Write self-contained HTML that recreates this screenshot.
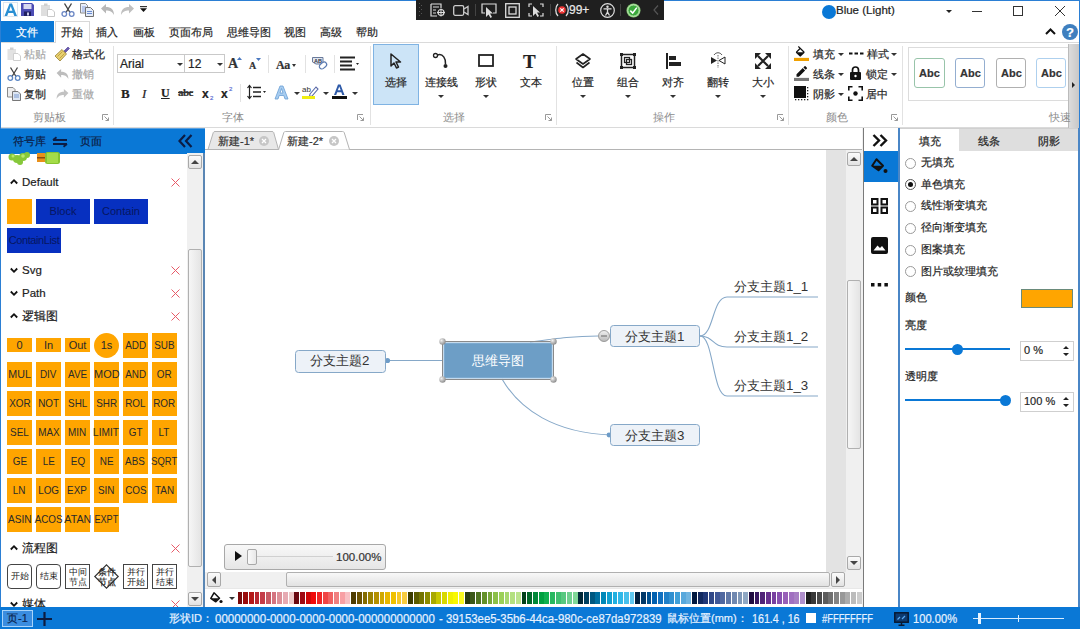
<!DOCTYPE html>
<html><head><meta charset="utf-8">
<style>
*{box-sizing:border-box;margin:0;padding:0}
body{width:1080px;height:629px;position:relative;overflow:hidden;background:#fff;font-family:"Liberation Sans",sans-serif;font-size:12px;color:#262626}
.a{position:absolute}
.t{position:absolute;white-space:nowrap;line-height:1;font-size:11px;-webkit-text-stroke-width:0.2px}
svg{position:absolute;overflow:visible}
.sep{position:absolute;width:1px;background:#e2e2e2}
.gl{position:absolute;color:#8c8c8c;font-size:11px;line-height:1;white-space:nowrap}
.dd{position:absolute;width:0;height:0;border-left:3px solid transparent;border-right:3px solid transparent;border-top:3px solid #333}
.x{position:absolute;color:#e04040;font-size:14px;line-height:1}
.cell{position:absolute;width:25px;height:25px;background:#ffa500;color:#2a2a2a;font-size:11px;line-height:25px;white-space:nowrap;display:flex;justify-content:center}
.sw{position:absolute;top:592px;width:5px;height:12px}
.fc{position:absolute;top:564px;width:25px;height:25px;border:1px solid #444;background:#fff;font-size:9px;line-height:10px;text-align:center;color:#222}
</style></head><body>
<!-- window border -->
<div class="a" style="left:0;top:0;width:1080px;height:1px;background:#2b7fd4"></div>
<div class="a" style="left:0;top:0;width:1px;height:629px;background:#2b7fd4"></div>
<div class="a" style="left:1079px;top:0;width:1px;height:629px;background:#2b7fd4"></div>
<!-- TITLE BAR -->
<svg style="left:3px;top:2px" width="16" height="15" viewBox="0 0 16 15"><rect x="0.5" y="0.5" width="14" height="14" fill="none" stroke="#dde6f0"/><path d="M1.5 14 L6.5 1.5 L9 1.5 L14 14 L11.3 14 L10.2 11 L5.3 11 L4.2 14 Z M6.1 8.7 L9.4 8.7 L7.75 4.2 Z" fill="#2a8fd3"/></svg>
<svg style="left:21px;top:3px" width="13" height="13" viewBox="0 0 13 13"><path d="M0 0H11L13 2V13H0Z" fill="#4c4cb4"/><rect x="2.5" y="1" width="8" height="5" fill="#d8d8f0"/><rect x="3" y="8.5" width="7" height="4.5" fill="#1e1e60"/><rect x="6" y="9.5" width="2" height="3" fill="#c8c8e8"/></svg>
<svg style="left:41px;top:3px" width="14" height="14" viewBox="0 0 14 14"><rect x="0" y="2" width="9" height="11" fill="#dedede"/><rect x="3" y="0.5" width="3.5" height="2.5" fill="#cfcfcf"/><path d="M6.5 6.5H11L13.5 9V13.5H6.5Z" fill="#fff" stroke="#c8c8c8"/></svg>
<svg style="left:61px;top:3px" width="14" height="14" viewBox="0 0 14 14"><path d="M3.5 0.5 L9 9.5 M10.5 0.5 L5 9.5" stroke="#444" stroke-width="1.4" fill="none"/><circle cx="3.3" cy="11" r="2.3" fill="none" stroke="#6a86c4" stroke-width="1.3"/><circle cx="10.7" cy="11" r="2.3" fill="none" stroke="#6a86c4" stroke-width="1.3"/></svg>
<svg style="left:80px;top:3px" width="14" height="14" viewBox="0 0 14 14"><path d="M0.5 0.5H5.5L7.5 2.5V10H0.5Z" fill="#e8eefa" stroke="#8a8a8a"/><path d="M2 4H6M2 6H6M2 8H5" stroke="#8aa4e0"/><path d="M5.5 4.5H10.5L13.5 7.5V13.5H5.5Z" fill="#e4ecf8" stroke="#707070"/><path d="M7 8.5H12M7 10.5H12" stroke="#6a8ad0"/></svg>
<svg style="left:101px;top:4px" width="13" height="11" viewBox="0 0 13 11"><path d="M0 4.5 L5 0 V3 C10 3 13 5.5 13 11 C11 7.5 9 6.5 5 6.5 V9.5 Z" fill="#b8b8b8"/></svg>
<svg style="left:121px;top:4px" width="13" height="11" viewBox="0 0 13 11"><path d="M13 4.5 L8 0 V3 C3 3 0 5.5 0 11 C2 7.5 4 6.5 8 6.5 V9.5 Z" fill="#c0c0c0"/></svg>
<svg style="left:140px;top:6px" width="7" height="6" viewBox="0 0 7 6"><path d="M0 0.6H7" stroke="#333" stroke-width="1.2"/><path d="M0 2.3H7L3.5 6Z" fill="#111"/></svg>

<div class="a" style="left:416px;top:0;width:248px;height:20px;background:#1f1f1f"></div>
<svg style="left:419px;top:3px" width="4" height="14"><g fill="#555"><rect x="0" y="0" width="1" height="1"/><rect x="2" y="2" width="1" height="1"/><rect x="0" y="4" width="1" height="1"/><rect x="2" y="6" width="1" height="1"/><rect x="0" y="8" width="1" height="1"/><rect x="2" y="10" width="1" height="1"/><rect x="0" y="12" width="1" height="1"/></g></svg>
<svg style="left:430px;top:3px" width="16" height="14" viewBox="0 0 16 14"><path d="M1 1H11V5M1 1V13H7M3 4H9M3 7H6M3 10H6" stroke="#ddd" fill="none" stroke-width="1.2"/><circle cx="11" cy="9.5" r="3" fill="none" stroke="#ddd" stroke-width="1.2"/><path d="M11 5.5V13.5M7 9.5H15" stroke="#ddd"/></svg>
<svg style="left:453px;top:5px" width="16" height="11" viewBox="0 0 16 11"><rect x="0.7" y="0.7" width="10" height="9.6" rx="1.5" fill="none" stroke="#ccc" stroke-width="1.3"/><path d="M11 4 L15 1.5 V9.5 L11 7" fill="none" stroke="#ccc" stroke-width="1.3"/></svg>
<div class="a" style="left:475px;top:4px;width:1px;height:12px;background:#444"></div>
<svg style="left:481px;top:3px" width="16" height="15" viewBox="0 0 16 15"><path d="M4 10H1V1H15V10H12" fill="none" stroke="#ddd" stroke-width="1.2"/><path d="M5 4 L5 14 L7.5 11.5 L9.5 15 L11 14 L9 10.5 L12 10.5 Z" fill="#ddd"/></svg>
<svg style="left:505px;top:3px" width="15" height="15" viewBox="0 0 15 15"><rect x="0.7" y="0.7" width="13.6" height="13.6" fill="none" stroke="#ddd" stroke-width="1.3"/><rect x="4" y="4" width="7" height="7" fill="none" stroke="#ddd" stroke-width="1.3"/></svg>
<svg style="left:528px;top:3px" width="16" height="15" viewBox="0 0 16 15"><path d="M1 4V1H4M12 1H15V4M15 10V13H12M4 13H1V10" fill="none" stroke="#ddd" stroke-width="1.2"/><path d="M5 3 L5 13 L7.5 10.5 L9.5 14 L11 13 L9 9.5 L12 9.5 Z" fill="#ddd"/></svg>
<div class="a" style="left:550px;top:4px;width:1px;height:12px;background:#444"></div>
<svg style="left:555px;top:3px" width="14" height="14" viewBox="0 0 14 14"><path d="M3 1 C0 4 0 10 3 13 M11 1 C14 4 14 10 11 13" fill="none" stroke="#ddd" stroke-width="1.3"/><circle cx="7" cy="7" r="3.8" fill="#e33"/><path d="M5.3 5.3 L8.7 8.7 M8.7 5.3 L5.3 8.7" stroke="#fff" stroke-width="1.1"/></svg>
<div class="t" style="left:569px;top:4px;color:#e8e8e8;font-size:12px">99+</div>
<svg style="left:600px;top:3px" width="15" height="15" viewBox="0 0 15 15"><circle cx="7.5" cy="7.5" r="6.8" fill="none" stroke="#ddd" stroke-width="1.2"/><circle cx="7.5" cy="3.8" r="1.2" fill="#ddd"/><path d="M3.5 5.8H11.5M7.5 5.8V9M7.5 9L5.5 12.5M7.5 9L9.5 12.5" stroke="#ddd" stroke-width="1.3" fill="none"/></svg>
<div class="a" style="left:620px;top:4px;width:1px;height:12px;background:#444"></div>
<svg style="left:626px;top:3px" width="15" height="15" viewBox="0 0 15 15"><circle cx="7.5" cy="7.5" r="7" fill="#8ccf7a"/><circle cx="7.5" cy="7.5" r="5.6" fill="#3aa83a" stroke="#d8f0d0" stroke-width="0.8"/><path d="M4.3 7.6 L6.7 10 L10.8 4.6" stroke="#fff" stroke-width="1.5" fill="none"/></svg>
<svg style="left:653px;top:5px" width="6" height="10" viewBox="0 0 6 10"><path d="M5 0.5 L1 5 L5 9.5" stroke="#555" fill="none" stroke-width="1.2"/></svg>

<div class="a" style="left:822px;top:5px;width:14px;height:14px;border-radius:50%;background:#0a78d6"></div>
<div class="t" style="left:836px;top:5px;font-size:11.5px;color:#222">Blue (Light)</div>
<div class="dd" style="left:946px;top:10px;border-width:3px 3px 0 3px;border-top-color:#222"></div>
<div class="a" style="left:972px;top:11px;width:10px;height:1px;background:#333"></div>
<div class="a" style="left:1013px;top:6px;width:10px;height:10px;border:1px solid #333"></div>
<svg style="left:1055px;top:6px" width="10" height="10" viewBox="0 0 10 10"><path d="M0 0L10 10M10 0L0 10" stroke="#333" stroke-width="1"/></svg>
<svg style="left:1045px;top:28px" width="11" height="7" viewBox="0 0 11 7"><path d="M1 6 L5.5 1.5 L10 6" stroke="#111" stroke-width="2" fill="none"/></svg>
<div class="a" style="left:1062px;top:24px;width:16px;height:16px;border-radius:50%;background:#3f7fbf"></div>
<div class="t" style="left:1066px;top:26px;font-size:13px;font-weight:bold;color:#fff">?</div>
<!-- MENU BAR -->
<div class="a" style="left:1px;top:21px;width:53px;height:21px;background:#0a78d6"></div>
<div class="t" style="left:16px;top:27px;color:#fff">文件</div>
<div class="a" style="left:55px;top:21px;width:35px;height:22px;background:#fff;border:1px solid #d8d8d8;border-bottom:none;z-index:2"></div>
<div class="t" style="left:61px;top:27px;z-index:3">开始</div>
<div class="t" style="left:96px;top:27px">插入</div>
<div class="t" style="left:133px;top:27px">画板</div>
<div class="t" style="left:169px;top:27px">页面布局</div>
<div class="t" style="left:227px;top:27px">思维导图</div>
<div class="t" style="left:284px;top:27px">视图</div>
<div class="t" style="left:320px;top:27px">高级</div>
<div class="t" style="left:356px;top:27px">帮助</div>
<div class="a" style="left:1px;top:42px;width:1078px;height:1px;background:#dadada"></div>
<div class="a" style="left:1px;top:127px;width:1078px;height:1px;background:#dadada"></div>
<!-- RIBBON: clipboard -->
<svg style="left:7px;top:47px" width="14" height="14" viewBox="0 0 14 14"><rect x="0.5" y="2" width="8.5" height="11" fill="#e2e2e2"/><rect x="3" y="0.5" width="3.5" height="2.5" fill="#cfcfcf"/><path d="M6.5 6.5H11L13.5 9V13.5H6.5Z" fill="#fff" stroke="#cfcfcf"/></svg>
<div class="t" style="left:24px;top:49px;color:#a8a8a8">粘贴</div>
<svg style="left:54px;top:46px" width="16" height="15" viewBox="0 0 16 15"><path d="M9.5 5.5 L14 1 L15.5 2.5 L11 7" fill="#6a5ab0" stroke="#4a3a90" stroke-width="0.6"/><path d="M1 10 L8 3.5 L12.5 8 L6 15 Z" fill="#e8d070" stroke="#8a7020" stroke-width="0.7"/><path d="M3.5 10.5 L8.5 5.5M5.5 12.5 L10.5 7.5" stroke="#b09030" stroke-width="0.7"/></svg>
<div class="t" style="left:72px;top:49px;color:#262626">格式化</div>
<svg style="left:7px;top:67px" width="14" height="14" viewBox="0 0 14 14"><path d="M3.5 0.5 L9 9.5 M10.5 0.5 L5 9.5" stroke="#444" stroke-width="1.3" fill="none"/><circle cx="3.3" cy="11" r="2.3" fill="none" stroke="#5a86c4" stroke-width="1.3"/><circle cx="10.7" cy="11" r="2.3" fill="none" stroke="#5a86c4" stroke-width="1.3"/></svg>
<div class="t" style="left:24px;top:69px;color:#262626">剪贴</div>
<svg style="left:56px;top:69px" width="13" height="10" viewBox="0 0 13 11"><path d="M0 4.5 L5 0 V3 C10 3 13 5.5 13 11 C11 7.5 9 6.5 5 6.5 V9.5 Z" fill="#bdbdbd"/></svg>
<div class="t" style="left:72px;top:69px;color:#a8a8a8">撤销</div>
<svg style="left:7px;top:87px" width="14" height="14" viewBox="0 0 14 14"><path d="M0.5 0.5H6L8 2.5V10H0.5Z" fill="#eee" stroke="#8a8a8a"/><path d="M5.5 4.5H11L13.5 7V13.5H5.5Z" fill="#dde6f2" stroke="#777"/><path d="M7 8H12M7 10H12" stroke="#7a9ad0"/></svg>
<div class="t" style="left:24px;top:89px;color:#262626">复制</div>
<svg style="left:56px;top:89px" width="13" height="10" viewBox="0 0 13 11"><path d="M13 4.5 L8 0 V3 C3 3 0 5.5 0 11 C2 7.5 4 6.5 8 6.5 V9.5 Z" fill="#c2c2c2"/></svg>
<div class="t" style="left:72px;top:89px;color:#a8a8a8">重做</div>
<div class="gl" style="left:33px;top:112px">剪贴板</div>
<svg style="left:102px;top:114px" width="7" height="7" viewBox="0 0 7 7"><path d="M0.5 6V0.5H6M2.5 2.5L6.5 6.5M6.5 3.5V6.5H3.5" stroke="#999" fill="none"/></svg>
<div class="sep" style="left:113px;top:46px;height:79px"></div>

<!-- font group -->
<div class="a" style="left:117px;top:54px;width:68px;height:19px;border:1px solid #c9c9c9;background:#fff"></div>
<div class="t" style="left:120px;top:58px;font-size:12px;color:#222">Arial</div>
<div class="dd" style="left:177px;top:63px"></div>
<div class="a" style="left:184px;top:54px;width:41px;height:19px;border:1px solid #c9c9c9;background:#fff"></div>
<div class="t" style="left:188px;top:58px;font-size:12px;color:#222">12</div>
<div class="dd" style="left:217px;top:63px"></div>
<div class="t" style="left:228px;top:57px;font-family:'Liberation Serif',serif;font-weight:bold;font-size:14px;color:#333">A</div>
<svg style="left:237px;top:57px" width="5" height="3"><path d="M0 3L2.5 0L5 3Z" fill="#4a78c0"/></svg>
<div class="t" style="left:249px;top:61px;font-family:'Liberation Serif',serif;font-weight:bold;font-size:10px;color:#333">A</div>
<svg style="left:256px;top:58px" width="5" height="3"><path d="M0 0L2.5 3L5 0Z" fill="#4a78c0"/></svg>
<div class="sep" style="left:268px;top:55px;height:18px"></div>
<div class="t" style="left:276px;top:59px;font-family:'Liberation Serif',serif;font-weight:bold;font-size:12px;color:#333;letter-spacing:-0.5px">Aa</div>
<div class="dd" style="left:292px;top:64px;border-width:3px 2.5px 0 2.5px"></div>
<div class="sep" style="left:305px;top:55px;height:18px"></div>
<svg style="left:312px;top:56px" width="16" height="15" viewBox="0 0 16 15"><path d="M0.5 1.5H11V8H4L0.5 6Z" fill="#dfe6f0" stroke="#6a7a9a"/><text x="2" y="6.5" font-size="5.5" font-family="Liberation Sans" font-weight="bold" fill="#334">AB</text><rect x="7" y="7" width="8" height="5" rx="2.5" transform="rotate(-40 11 9.5)" fill="#fff" stroke="#5a7ab0" stroke-width="1.2"/></svg>
<div class="sep" style="left:334px;top:55px;height:18px"></div>
<svg style="left:340px;top:56px" width="20" height="15" viewBox="0 0 20 15"><path d="M0 1.5H15M0 5.5H12M0 9.5H12M0 13.5H15" stroke="#222" stroke-width="1.8"/><path d="M16 7L19 7L17.5 9Z" fill="#222"/></svg>

<div class="t" style="left:121px;top:87px;font-family:'Liberation Serif',serif;font-weight:bold;font-size:13px;color:#222">B</div>
<div class="t" style="left:142px;top:87px;font-family:'Liberation Serif',serif;font-style:italic;font-size:13px;color:#222">I</div>
<div class="t" style="left:161px;top:87px;font-family:'Liberation Serif',serif;font-weight:bold;font-size:12px;color:#222;text-decoration:underline">U</div>
<div class="t" style="left:178px;top:87px;font-family:'Liberation Serif',serif;font-weight:bold;font-size:11px;color:#333;text-decoration:line-through;letter-spacing:-0.5px">abc</div>
<div class="t" style="left:202px;top:88px;font-weight:bold;font-size:12px;color:#222">x</div>
<div class="t" style="left:210px;top:95px;font-size:6px;color:#5a6ad0">2</div>
<div class="t" style="left:221px;top:88px;font-weight:bold;font-size:12px;color:#222">x</div>
<div class="t" style="left:229px;top:86px;font-size:6px;color:#5a6ad0">2</div>
<div class="sep" style="left:240px;top:84px;height:18px"></div>
<svg style="left:247px;top:85px" width="20" height="14" viewBox="0 0 20 14"><path d="M2.5 0.5V13.5M0.5 3L2.5 0.5L4.5 3M0.5 11L2.5 13.5L4.5 11" stroke="#222" stroke-width="1.2" fill="none"/><path d="M6 2.5H14M6 7H14M6 11.5H14" stroke="#222" stroke-width="1.6"/><path d="M16 6L19 6L17.5 8Z" fill="#222"/></svg>
<svg style="left:274px;top:85px" width="15" height="15" viewBox="0 0 15 15"><path d="M1 14 L6 1 H9 L14 14 H11 L9.8 10.5 H5.2 L4 14 Z M6 8 H9 L7.5 3.5Z" fill="#a8cdf0" stroke="#6a9ed4" stroke-width="0.8"/></svg>
<div class="dd" style="left:294px;top:92px"></div>
<svg style="left:302px;top:84px" width="17" height="16" viewBox="0 0 17 16"><text x="0" y="8" font-size="8" font-family="Liberation Sans" fill="#333">ab</text><path d="M8 10 L14 3 L16 5 L10 12 L7.5 12.5Z" fill="#fff" stroke="#5a6aa8" stroke-width="1.1"/><rect x="0" y="12" width="13" height="3" fill="#f0ee10"/></svg>
<div class="dd" style="left:323px;top:92px"></div>
<svg style="left:332px;top:84px" width="15" height="16" viewBox="0 0 15 16"><path d="M2 11 L6 0.5 H8.5 L12.5 11 H10.3 L9.3 8.2 H5.2 L4.2 11 Z M5.8 6.3 H8.7 L7.25 2.5Z" fill="#2e5aa8"/><rect x="0" y="12" width="15" height="3" fill="#111"/></svg>
<div class="dd" style="left:352px;top:92px"></div>
<div class="gl" style="left:222px;top:112px">字体</div>
<svg style="left:357px;top:114px" width="7" height="7" viewBox="0 0 7 7"><path d="M0.5 6V0.5H6M2.5 2.5L6.5 6.5M6.5 3.5V6.5H3.5" stroke="#999" fill="none"/></svg>
<div class="sep" style="left:370px;top:46px;height:79px"></div>

<!-- selection group -->
<div class="a" style="left:373px;top:44px;width:46px;height:61px;background:#cce4f7;border:1px solid #7fb3e3"></div>
<svg style="left:390px;top:53px" width="12" height="16" viewBox="0 0 12 16"><path d="M1 1 L1 13 L4 10 L6.5 15 L8.5 14 L6 9 L10.5 9 Z" fill="none" stroke="#222" stroke-width="1.5" stroke-linejoin="round"/></svg>
<div class="t" style="left:385px;top:77px">选择</div>
<svg style="left:433px;top:53px" width="16" height="16" viewBox="0 0 16 16"><circle cx="2.5" cy="2.5" r="2" fill="none" stroke="#222" stroke-width="1.3"/><path d="M4.5 2 C10 0 13 6 12.5 11" stroke="#222" stroke-width="1.5" fill="none"/><circle cx="12.5" cy="13" r="2" fill="#222"/></svg>
<div class="t" style="left:425px;top:77px">连接线</div>
<div class="dd" style="left:438px;top:95px"></div>
<svg style="left:478px;top:54px" width="16" height="13" viewBox="0 0 16 13"><rect x="1" y="1" width="14" height="11" fill="none" stroke="#222" stroke-width="1.8"/></svg>
<div class="t" style="left:475px;top:77px">形状</div>
<div class="dd" style="left:483px;top:95px"></div>
<div class="t" style="left:523px;top:52px;font-family:'Liberation Serif',serif;font-weight:bold;font-size:19px;color:#222">T</div>
<div class="t" style="left:520px;top:77px">文本</div>
<div class="gl" style="left:443px;top:112px">选择</div>
<svg style="left:545px;top:114px" width="7" height="7" viewBox="0 0 7 7"><path d="M0.5 6V0.5H6M2.5 2.5L6.5 6.5M6.5 3.5V6.5H3.5" stroke="#999" fill="none"/></svg>
<div class="sep" style="left:556px;top:46px;height:79px"></div>

<!-- operations group -->
<svg style="left:575px;top:53px" width="16" height="16" viewBox="0 0 16 16"><path d="M8 1 L15 6 L8 11 L1 6 Z" fill="none" stroke="#222" stroke-width="1.6" stroke-linejoin="round"/><path d="M1.5 9.5 L8 14.5 L14.5 9.5" fill="none" stroke="#222" stroke-width="1.6" stroke-linejoin="round"/></svg>
<div class="t" style="left:572px;top:77px">位置</div>
<div class="dd" style="left:580px;top:95px"></div>
<svg style="left:620px;top:53px" width="16" height="16" viewBox="0 0 16 16"><rect x="1.5" y="1.5" width="13" height="13" fill="none" stroke="#222" stroke-width="1.5"/><rect x="0" y="0" width="3" height="3" fill="#222"/><rect x="13" y="0" width="3" height="3" fill="#222"/><rect x="0" y="13" width="3" height="3" fill="#222"/><rect x="13" y="13" width="3" height="3" fill="#222"/><rect x="4.5" y="4.5" width="5" height="5" fill="none" stroke="#222" stroke-width="1.3"/><rect x="6.5" y="6.5" width="5" height="5" fill="none" stroke="#222" stroke-width="1.3"/></svg>
<div class="t" style="left:617px;top:77px">组合</div>
<div class="dd" style="left:625px;top:95px"></div>
<svg style="left:666px;top:53px" width="16" height="16" viewBox="0 0 16 16"><rect x="0" y="0" width="2" height="16" fill="#222"/><rect x="3" y="3" width="7" height="4" fill="#222"/><rect x="3" y="9" width="12" height="4" fill="#222"/></svg>
<div class="t" style="left:662px;top:77px">对齐</div>
<div class="dd" style="left:670px;top:95px"></div>
<svg style="left:710px;top:52px" width="16" height="18" viewBox="0 0 16 18"><path d="M1 5 L7 8.5 L1 12 Z" fill="#222"/><path d="M15 5 L9 8.5 L15 12 Z" fill="none" stroke="#222" stroke-width="1"/><path d="M8 3V16" stroke="#444" stroke-width="0.8" stroke-dasharray="1.5 1"/><path d="M4 3 C6 0 10 0 12 3" fill="none" stroke="#444" stroke-width="0.9"/></svg>
<div class="t" style="left:707px;top:77px">翻转</div>
<div class="dd" style="left:715px;top:95px"></div>
<svg style="left:755px;top:53px" width="16" height="16" viewBox="0 0 16 16"><path d="M3 3L13 13M13 3L3 13" stroke="#222" stroke-width="2.2"/><path d="M0 0H6L0 6Z M16 0H10L16 6Z M0 16H6L0 10Z M16 16H10L16 10Z" fill="#222"/></svg>
<div class="t" style="left:752px;top:77px">大小</div>
<div class="dd" style="left:760px;top:95px"></div>
<div class="gl" style="left:653px;top:112px">操作</div>
<svg style="left:777px;top:114px" width="7" height="7" viewBox="0 0 7 7"><path d="M0.5 6V0.5H6M2.5 2.5L6.5 6.5M6.5 3.5V6.5H3.5" stroke="#999" fill="none"/></svg>
<div class="sep" style="left:788px;top:46px;height:79px"></div>

<!-- color group -->
<svg style="left:794px;top:46px" width="15" height="15" viewBox="0 0 24 24"><path d="M16.56 8.94L7.62 0 6.21 1.41l2.38 2.38-5.15 5.15c-.59.59-.59 1.54 0 2.12l5.5 5.5c.29.29.68.44 1.06.44s.77-.15 1.06-.44l5.5-5.5c.59-.58.59-1.53 0-2.120zM5.21 10L10 5.21 14.79 10H5.21z" fill="#111"/><rect x="0" y="19" width="24" height="5" fill="#f0a000"/></svg>
<div class="t" style="left:813px;top:49px">填充</div>
<div class="dd" style="left:838px;top:53px"></div>
<svg style="left:794px;top:66px" width="15" height="15" viewBox="0 0 24 24"><path d="M17.75 7L14 3.25l-10 10V17h3.75l10-10zm2.96-2.96c.39-.39.39-1.02 0-1.41L18.370.29c-.39-.39-1.02-.39-1.41 0L15 2.25 18.75 6l1.960-1.960z" fill="#111"/><rect x="0" y="19" width="24" height="5" fill="#777"/></svg>
<div class="t" style="left:813px;top:69px">线条</div>
<div class="dd" style="left:838px;top:73px"></div>
<svg style="left:794px;top:86px" width="15" height="15" viewBox="0 0 15 15"><rect x="0" y="0" width="12" height="12" fill="#111"/><g fill="#222"><rect x="13" y="1" width="1.3" height="1.3"/><rect x="13" y="4" width="1.3" height="1.3"/><rect x="13" y="7" width="1.3" height="1.3"/><rect x="13" y="10" width="1.3" height="1.3"/><rect x="13" y="13" width="1.3" height="1.3"/><rect x="1" y="13" width="1.3" height="1.3"/><rect x="4" y="13" width="1.3" height="1.3"/><rect x="7" y="13" width="1.3" height="1.3"/><rect x="10" y="13" width="1.3" height="1.3"/></g></svg>
<div class="t" style="left:813px;top:89px">阴影</div>
<div class="dd" style="left:838px;top:93px"></div>
<svg style="left:849px;top:52px" width="15" height="3" viewBox="0 0 15 3"><path d="M0 1.5H3.5M5.5 1.5H9M11 1.5H14.5" stroke="#111" stroke-width="2"/></svg>
<div class="t" style="left:867px;top:49px">样式</div>
<div class="dd" style="left:891px;top:53px"></div>
<svg style="left:850px;top:66px" width="11" height="14" viewBox="0 0 11 14"><path d="M2.5 6V4 A3 3 0 0 1 8.5 4 V6" fill="none" stroke="#111" stroke-width="1.7"/><rect x="0" y="6" width="11" height="8" rx="1" fill="#111"/><circle cx="5.5" cy="10" r="1.2" fill="#fff"/></svg>
<div class="t" style="left:866px;top:69px">锁定</div>
<div class="dd" style="left:891px;top:73px"></div>
<svg style="left:848px;top:86px" width="15" height="15" viewBox="0 0 15 15"><path d="M0.8 4.5V0.8H4.5M10.5 0.8H14.2V4.5M14.2 10.5V14.2H10.5M4.5 14.2H0.8V10.5" stroke="#111" stroke-width="1.6" fill="none"/><circle cx="7.5" cy="7.5" r="2.2" fill="#111"/></svg>
<div class="t" style="left:866px;top:89px">居中</div>
<div class="gl" style="left:826px;top:112px">颜色</div>
<svg style="left:891px;top:114px" width="7" height="7" viewBox="0 0 7 7"><path d="M0.5 6V0.5H6M2.5 2.5L6.5 6.5M6.5 3.5V6.5H3.5" stroke="#999" fill="none"/></svg>
<div class="sep" style="left:902px;top:46px;height:79px"></div>

<!-- quick styles -->
<div class="a" style="left:908px;top:47px;width:162px;height:54px;border:1px solid #dcdcdc;background:#fff"></div>
<div class="a" style="left:914px;top:58px;width:31px;height:30px;border:1px solid #98c4aa;border-radius:3px;background:#fff"></div>
<div class="a" style="left:955px;top:58px;width:30px;height:30px;border:1px solid #94aed0;border-radius:3px;background:#fff"></div>
<div class="a" style="left:996px;top:58px;width:30px;height:30px;border:1px solid #b0b0b0;border-radius:3px;background:#fff"></div>
<div class="a" style="left:1036px;top:58px;width:30px;height:30px;border:1px solid #aed0ee;border-radius:3px;background:#fff"></div>
<div class="t" style="left:919px;top:68px;font-size:11px;font-weight:bold;color:#333">Abc</div>
<div class="t" style="left:960px;top:68px;font-size:11px;font-weight:bold;color:#333">Abc</div>
<div class="t" style="left:1001px;top:68px;font-size:11px;font-weight:bold;color:#333">Abc</div>
<div class="t" style="left:1041px;top:68px;font-size:11px;font-weight:bold;color:#333">Abc</div>
<div class="a" style="left:1068px;top:44px;width:11px;height:84px;background:linear-gradient(90deg,#dcdcdc,#c8c8c8);border-left:1px solid #bbb"></div>
<svg style="left:1072px;top:82px" width="3" height="6"><path d="M0 0L3 3L0 6Z" fill="#222"/></svg>
<div class="gl" style="left:1049px;top:112px">快速</div>
<!-- LEFT PANEL -->
<div class="a" style="left:1px;top:128px;width:204px;height:1px;background:#5aa0e0"></div>
<div class="a" style="left:0;top:129px;width:205px;height:25px;background:#0a78d6"></div>
<div class="t" style="left:13px;top:136px;color:#0c1c44">符号库</div>
<svg style="left:52px;top:137px" width="16" height="10" viewBox="0 0 16 10"><path d="M1 3H15M1 3L4.5 0.3M15 7H1M15 7L11.5 9.7" stroke="#0c1c44" stroke-width="1.8" fill="none"/></svg>
<div class="t" style="left:80px;top:136px;color:#0c1c44">页面</div>
<svg style="left:178px;top:134px" width="15" height="14" viewBox="0 0 15 14"><path d="M7 1L1.5 7L7 13M13.5 1L8 7L13.5 13" stroke="#0c1c44" stroke-width="2.2" fill="none"/></svg>
<div class="a" style="left:1px;top:154px;width:202px;height:453px;background:#fff"></div>
<svg style="left:8px;top:152px" width="53" height="13" viewBox="0 0 53 13"><g fill="#86c83a"><circle cx="4" cy="5" r="3.5"/><circle cx="9" cy="7" r="4"/><circle cx="15" cy="5" r="4"/><circle cx="19" cy="3" r="3"/><circle cx="12" cy="10" r="3"/></g><g fill="#b8e86a"><circle cx="5" cy="4" r="1.5"/><circle cx="15" cy="4" r="1.8"/></g><rect x="29" y="1" width="8" height="9" fill="#e8901a"/><rect x="29" y="5" width="8" height="1.5" fill="#8a4a10"/><rect x="37" y="0" width="15" height="12" rx="2.5" fill="#86c430"/><rect x="39" y="1" width="11" height="10" fill="#a4dc48"/></svg>
<svg style="left:10px;top:179px" width="8" height="5" viewBox="0 0 8 5"><path d="M0.8 4.5L4 1.2L7.2 4.5" stroke="#111" stroke-width="1.8" fill="none"/></svg>
<div class="t" style="left:22px;top:177px;font-size:11.5px;color:#222">Default</div>
<svg style="left:171px;top:178px" width="9" height="9" viewBox="0 0 9 9"><path d="M0.5 0.5L8.5 8.5M8.5 0.5L0.5 8.5" stroke="#e85a68" stroke-width="1"/></svg>
<div class="a" style="left:7px;top:199px;width:25px;height:25px;background:#ffa500"></div>
<div class="a" style="left:36px;top:199px;width:54px;height:25px;background:#0730c0;color:#061660;font-size:11px;line-height:25px;text-align:center">Block</div>
<div class="a" style="left:94px;top:199px;width:54px;height:25px;background:#0730c0;color:#061660;font-size:11px;line-height:25px;text-align:center">Contain</div>
<div class="a" style="left:7px;top:228px;width:54px;height:25px;background:#0730c0;color:#061660;font-size:11px;line-height:25px;text-align:center;letter-spacing:-0.4px;white-space:nowrap;overflow:hidden">ContainList</div>
<svg style="left:10px;top:268px" width="8" height="5" viewBox="0 0 8 5"><path d="M0.8 0.5L4 3.8L7.2 0.5" stroke="#111" stroke-width="1.8" fill="none"/></svg>
<div class="t" style="left:22px;top:265px;font-size:11.5px;color:#222">Svg</div>
<svg style="left:171px;top:266px" width="9" height="9" viewBox="0 0 9 9"><path d="M0.5 0.5L8.5 8.5M8.5 0.5L0.5 8.5" stroke="#e85a68" stroke-width="1"/></svg>
<svg style="left:10px;top:291px" width="8" height="5" viewBox="0 0 8 5"><path d="M0.8 0.5L4 3.8L7.2 0.5" stroke="#111" stroke-width="1.8" fill="none"/></svg>
<div class="t" style="left:22px;top:288px;font-size:11.5px;color:#222">Path</div>
<svg style="left:171px;top:289px" width="9" height="9" viewBox="0 0 9 9"><path d="M0.5 0.5L8.5 8.5M8.5 0.5L0.5 8.5" stroke="#e85a68" stroke-width="1"/></svg>
<svg style="left:10px;top:313px" width="8" height="5" viewBox="0 0 8 5"><path d="M0.8 4.5L4 1.2L7.2 4.5" stroke="#111" stroke-width="1.8" fill="none"/></svg>
<div class="t" style="left:22px;top:311px;font-size:11.5px;color:#222">逻辑图</div>
<svg style="left:171px;top:312px" width="9" height="9" viewBox="0 0 9 9"><path d="M0.5 0.5L8.5 8.5M8.5 0.5L0.5 8.5" stroke="#e85a68" stroke-width="1"/></svg>
<div class="cell" style="left:7px;top:338px;height:14px;line-height:14px">0</div>
<div class="cell" style="left:36px;top:338px;height:14px;line-height:14px">In</div>
<div class="cell" style="left:65px;top:338px;height:14px;line-height:14px">Out</div>
<div class="cell" style="left:94px;top:333px;border-radius:50%">1s</div>
<div class="cell" style="left:123px;top:333px;letter-spacing:0"><span style="display:inline-block;transform:scaleX(0.9)">ADD</span></div>
<div class="cell" style="left:152px;top:333px;letter-spacing:0"><span style="display:inline-block;transform:scaleX(0.9)">SUB</span></div>
<div class="cell" style="left:7px;top:362px;letter-spacing:0"><span style="display:inline-block;transform:scaleX(0.972)">MUL</span></div>
<div class="cell" style="left:36px;top:362px;letter-spacing:0"><span style="display:inline-block;transform:scaleX(0.9)">DIV</span></div>
<div class="cell" style="left:65px;top:362px;letter-spacing:0"><span style="display:inline-block;transform:scaleX(0.9)">AVE</span></div>
<div class="cell" style="left:94px;top:362px;letter-spacing:0"><span style="display:inline-block;transform:scaleX(0.993)">MOD</span></div>
<div class="cell" style="left:123px;top:362px;letter-spacing:0"><span style="display:inline-block;transform:scaleX(0.9)">AND</span></div>
<div class="cell" style="left:152px;top:362px;letter-spacing:0"><span style="display:inline-block;transform:scaleX(0.9)">OR</span></div>
<div class="cell" style="left:7px;top:391px;letter-spacing:0"><span style="display:inline-block;transform:scaleX(0.9)">XOR</span></div>
<div class="cell" style="left:36px;top:391px;letter-spacing:0"><span style="display:inline-block;transform:scaleX(0.9)">NOT</span></div>
<div class="cell" style="left:65px;top:391px;letter-spacing:0"><span style="display:inline-block;transform:scaleX(0.9)">SHL</span></div>
<div class="cell" style="left:94px;top:391px;letter-spacing:0"><span style="display:inline-block;transform:scaleX(0.9)">SHR</span></div>
<div class="cell" style="left:123px;top:391px;letter-spacing:0"><span style="display:inline-block;transform:scaleX(0.9)">ROL</span></div>
<div class="cell" style="left:152px;top:391px;letter-spacing:0"><span style="display:inline-block;transform:scaleX(0.9)">ROR</span></div>
<div class="cell" style="left:7px;top:420px;letter-spacing:0"><span style="display:inline-block;transform:scaleX(0.9)">SEL</span></div>
<div class="cell" style="left:36px;top:420px;letter-spacing:0"><span style="display:inline-block;transform:scaleX(0.9)">MAX</span></div>
<div class="cell" style="left:65px;top:420px;letter-spacing:0"><span style="display:inline-block;transform:scaleX(0.9)">MIN</span></div>
<div class="cell" style="left:94px;top:420px;letter-spacing:0"><span style="display:inline-block;transform:scaleX(0.921)">LIMIT</span></div>
<div class="cell" style="left:123px;top:420px;letter-spacing:0"><span style="display:inline-block;transform:scaleX(0.9)">GT</span></div>
<div class="cell" style="left:152px;top:420px;letter-spacing:0"><span style="display:inline-block;transform:scaleX(0.9)">LT</span></div>
<div class="cell" style="left:7px;top:449px;letter-spacing:0"><span style="display:inline-block;transform:scaleX(0.9)">GE</span></div>
<div class="cell" style="left:36px;top:449px;letter-spacing:0"><span style="display:inline-block;transform:scaleX(0.9)">LE</span></div>
<div class="cell" style="left:65px;top:449px;letter-spacing:0"><span style="display:inline-block;transform:scaleX(0.9)">EQ</span></div>
<div class="cell" style="left:94px;top:449px;letter-spacing:0"><span style="display:inline-block;transform:scaleX(0.9)">NE</span></div>
<div class="cell" style="left:123px;top:449px;letter-spacing:0"><span style="display:inline-block;transform:scaleX(0.9)">ABS</span></div>
<div class="cell" style="left:152px;top:449px;letter-spacing:0"><span style="display:inline-block;transform:scaleX(0.851)">SQRT</span></div>
<div class="cell" style="left:7px;top:478px;letter-spacing:0"><span style="display:inline-block;transform:scaleX(0.9)">LN</span></div>
<div class="cell" style="left:36px;top:478px;letter-spacing:0"><span style="display:inline-block;transform:scaleX(0.9)">LOG</span></div>
<div class="cell" style="left:65px;top:478px;letter-spacing:0"><span style="display:inline-block;transform:scaleX(0.9)">EXP</span></div>
<div class="cell" style="left:94px;top:478px;letter-spacing:0"><span style="display:inline-block;transform:scaleX(0.9)">SIN</span></div>
<div class="cell" style="left:123px;top:478px;letter-spacing:0"><span style="display:inline-block;transform:scaleX(0.9)">COS</span></div>
<div class="cell" style="left:152px;top:478px;letter-spacing:0"><span style="display:inline-block;transform:scaleX(0.9)">TAN</span></div>
<div class="cell" style="left:7px;top:507px;letter-spacing:0"><span style="display:inline-block;transform:scaleX(0.919)">ASIN</span></div>
<div class="cell" style="left:36px;top:507px;letter-spacing:0"><span style="display:inline-block;transform:scaleX(0.894)">ACOS</span></div>
<div class="cell" style="left:65px;top:507px;letter-spacing:0"><span style="display:inline-block;transform:scaleX(0.973)">ATAN</span></div>
<div class="cell" style="left:94px;top:507px;letter-spacing:0"><span style="display:inline-block;transform:scaleX(0.829)">EXPT</span></div>
<svg style="left:10px;top:545px" width="8" height="5" viewBox="0 0 8 5"><path d="M0.8 4.5L4 1.2L7.2 4.5" stroke="#111" stroke-width="1.8" fill="none"/></svg>
<div class="t" style="left:22px;top:543px;font-size:11.5px;color:#222">流程图</div>
<svg style="left:171px;top:544px" width="9" height="9" viewBox="0 0 9 9"><path d="M0.5 0.5L8.5 8.5M8.5 0.5L0.5 8.5" stroke="#e85a68" stroke-width="1"/></svg>
<div class="fc" style="left:7px;border-radius:4px;line-height:23px;padding-top:0">开始</div>
<div class="fc" style="left:36px;border-radius:4px;line-height:23px;padding-top:0">结束</div>
<div class="fc" style="left:65px;border-radius:0;line-height:10px;padding-top:2px">中间<br>节点</div>
<svg style="left:94px;top:564px" width="25" height="25" viewBox="0 0 25 25"><path d="M12.5 0.8L24.2 12.5L12.5 24.2L0.8 12.5Z" fill="#fff" stroke="#333" stroke-width="1.2"/></svg>
<div class="t" style="left:94px;top:567px;width:25px;text-align:center;font-size:9px;line-height:10px;color:#222;white-space:normal">条件<br>节点</div>
<div class="fc" style="left:123px;border-radius:0;line-height:10px;padding-top:2px">并行<br>开始</div>
<div class="fc" style="left:152px;border-radius:0;line-height:10px;padding-top:2px">并行<br>结束</div>
<svg style="left:10px;top:602px" width="8" height="5" viewBox="0 0 8 5"><path d="M0.8 0.5L4 3.8L7.2 0.5" stroke="#111" stroke-width="1.8" fill="none"/></svg>
<div class="t" style="left:22px;top:599px;font-size:11.5px;color:#222">媒体</div>
<svg style="left:171px;top:600px" width="9" height="9" viewBox="0 0 9 9"><path d="M0.5 0.5L8.5 8.5M8.5 0.5L0.5 8.5" stroke="#e85a68" stroke-width="1"/></svg>
<div class="a" style="left:187px;top:153px;width:16px;height:454px;background:#f0f0f0"></div>
<div class="a" style="left:188px;top:155px;width:14px;height:14px;background:linear-gradient(#fbfbfb,#e2e2e2);border:1px solid #a9a9a9;border-radius:2px"></div>
<svg style="left:191px;top:160px" width="8" height="4"><path d="M0 4L4 0L8 4Z" fill="#444"/></svg>
<div class="a" style="left:188px;top:249px;width:14px;height:318px;background:linear-gradient(90deg,#f6f6f6,#e4e4e4);border:1px solid #b0b0b0;border-radius:2px"></div>
<div class="a" style="left:188px;top:592px;width:14px;height:14px;background:linear-gradient(#fbfbfb,#e2e2e2);border:1px solid #a9a9a9;border-radius:2px"></div>
<svg style="left:191px;top:597px" width="8" height="4"><path d="M0 0L4 4L8 0Z" fill="#444"/></svg>
<div class="a" style="left:203px;top:153px;width:2px;height:454px;background:#5a86b4"></div>
<!-- TABS -->
<div class="a" style="left:205px;top:128px;width:658px;height:22px;background:#fff"></div>
<svg style="left:205px;top:128px" width="658" height="23" viewBox="205 128 658 23">
<path d="M205 149.5H863" stroke="#b4b4b4" stroke-width="1"/>
<path d="M208 149.5 L213.3 132.5 Q213.8 131.5 215 131.5 H272 Q273.2 131.5 273.7 132.5 L278.5 149.5 Z" fill="#e8e8e8" stroke="#b4b4b4"/>
<path d="M278.5 150 L283.8 132.5 Q284.3 131.5 285.5 131.5 H342.5 Q343.7 131.5 344.2 132.5 L349.5 149.5" fill="#fff" stroke="#b4b4b4"/>
<path d="M279 150.5H349" stroke="#fff" stroke-width="1"/>
<circle cx="264" cy="141" r="5" fill="#c6c6c6"/><path d="M262 139L266 143M266 139L262 143" stroke="#fff" stroke-width="1.3"/>
<circle cx="334" cy="141" r="5" fill="#c6c6c6"/><path d="M332 139L336 143M336 139L332 143" stroke="#fff" stroke-width="1.3"/>
</svg>
<div class="t" style="left:218px;top:136px;color:#333">新建-1*</div>
<div class="t" style="left:287px;top:136px;color:#333">新建-2*</div>

<!-- CANVAS -->
<div class="a" style="left:205px;top:150px;width:621px;height:422px;background:#fff"></div>
<div class="a" style="left:826px;top:150px;width:20px;height:422px;background:#e3e3e3"></div>
<div class="a" style="left:846px;top:150px;width:16px;height:422px;background:#f0f0f0"></div>
<div class="a" style="left:847px;top:152px;width:14px;height:14px;background:linear-gradient(#fbfbfb,#e2e2e2);border:1px solid #a9a9a9;border-radius:2px"></div>
<svg style="left:850px;top:157px" width="8" height="4"><path d="M0 4L4 0L8 4Z" fill="#444"/></svg>
<div class="a" style="left:847px;top:280px;width:14px;height:169px;background:linear-gradient(90deg,#f6f6f6,#e4e4e4);border:1px solid #b0b0b0;border-radius:2px"></div>
<div class="a" style="left:847px;top:556px;width:14px;height:14px;background:linear-gradient(#fbfbfb,#e2e2e2);border:1px solid #a9a9a9;border-radius:2px"></div>
<svg style="left:850px;top:561px" width="8" height="4"><path d="M0 0L4 4L8 0Z" fill="#444"/></svg>

<!-- mind map -->
<svg style="left:0;top:0" width="1080" height="629" viewBox="0 0 1080 629">
<g fill="none" stroke="#86a8c8" stroke-width="1.1">
<path d="M390 360.5 H443"/>
<path d="M530 342 C560 338 575 336 598 336"/>
<path d="M502 379 C520 410 555 433 611 435"/>
<path d="M700 336 C714 336 712 297 727 297 H818"/>
<path d="M700 336 C714 336 712 347 727 347 H818"/>
<path d="M700 336 C714 336 712 396 727 396 H818"/>
</g>
<circle cx="387.5" cy="360.5" r="2.6" fill="#6d9cc8"/>
<circle cx="609" cy="435" r="2.4" fill="#6d9cc8"/>
<rect x="295.5" y="350.5" width="90" height="22" rx="3" fill="#edf2f8" stroke="#86a8c8"/>
<rect x="610.5" y="325.5" width="89" height="21" rx="3" fill="#edf2f8" stroke="#86a8c8"/>
<rect x="610.5" y="424.5" width="89" height="21" rx="3" fill="#edf2f8" stroke="#86a8c8"/>
<rect x="442.5" y="341.5" width="111" height="38" fill="none" stroke="#8a8a8a"/>
<rect x="444" y="343" width="108" height="35" fill="#6d9ec6" stroke="#8cb6da" stroke-width="1"/>
<defs><radialGradient id="hg" cx="0.35" cy="0.35" r="0.7"><stop offset="0" stop-color="#f0f0f0"/><stop offset="1" stop-color="#8a8a8a"/></radialGradient></defs>
<circle cx="442.5" cy="341.5" r="3.2" fill="url(#hg)"/>
<circle cx="553.5" cy="341.5" r="3.2" fill="url(#hg)"/>
<circle cx="442.5" cy="379.5" r="3.2" fill="url(#hg)"/>
<circle cx="553.5" cy="379.5" r="3.2" fill="url(#hg)"/>
<defs><linearGradient id="cg" x1="0" y1="0" x2="0" y2="1"><stop offset="0" stop-color="#f2f2f2"/><stop offset="1" stop-color="#b8b8b8"/></linearGradient></defs><circle cx="604" cy="336" r="5.5" fill="url(#cg)" stroke="#8a8a8a" stroke-width="0.8"/>
<path d="M601 336H607" stroke="#666" stroke-width="1"/>
</svg>
<div class="t" style="left:310px;top:354px;font-size:13.3px;color:#333;-webkit-text-stroke-width:0">分支主题2</div>
<div class="t" style="left:472px;top:354px;font-size:13.3px;color:#fff;-webkit-text-stroke-width:0">思维导图</div>
<div class="t" style="left:625px;top:330px;font-size:13.3px;color:#333;-webkit-text-stroke-width:0">分支主题1</div>
<div class="t" style="left:625px;top:429px;font-size:13.3px;color:#333;-webkit-text-stroke-width:0">分支主题3</div>
<div class="t" style="left:734px;top:280px;font-size:13.3px;color:#333;-webkit-text-stroke-width:0">分支主题1_1</div>
<div class="t" style="left:734px;top:330px;font-size:13.3px;color:#333;-webkit-text-stroke-width:0">分支主题1_2</div>
<div class="t" style="left:734px;top:379px;font-size:13.3px;color:#333;-webkit-text-stroke-width:0">分支主题1_3</div>

<!-- zoom control -->
<div class="a" style="left:224px;top:544px;width:162px;height:26px;background:linear-gradient(#f8f8f8,#e6e6e6);border:1px solid #a8a8a8;border-radius:3px"></div>
<svg style="left:235px;top:551px" width="7" height="10"><path d="M0 0L7 5L0 10Z" fill="#111"/></svg>
<div class="a" style="left:257px;top:556px;width:76px;height:1px;background:#d0d0d0"></div>
<div class="a" style="left:247px;top:549px;width:10px;height:16px;background:linear-gradient(90deg,#fafafa,#e8e8e8);border:1px solid #a8a8a8;border-radius:2px"></div>
<div class="t" style="left:336px;top:552px;font-size:11.5px;color:#333">100.00%</div>

<!-- h scrollbar -->
<div class="a" style="left:205px;top:572px;width:657px;height:16px;background:#f0f0f0"></div>
<div class="a" style="left:207px;top:572px;width:14px;height:15px;background:linear-gradient(#fbfbfb,#e2e2e2);border:1px solid #a9a9a9;border-radius:2px"></div>
<svg style="left:212px;top:576px" width="4" height="8"><path d="M4 0L0 4L4 8Z" fill="#444"/></svg>
<div class="a" style="left:286px;top:572px;width:544px;height:15px;background:linear-gradient(#f8f8f8,#e2e2e2);border:1px solid #b0b0b0;border-radius:2px"></div>
<div class="a" style="left:831px;top:572px;width:14px;height:15px;background:linear-gradient(#fbfbfb,#e2e2e2);border:1px solid #a9a9a9;border-radius:2px"></div>
<svg style="left:836px;top:576px" width="4" height="8"><path d="M0 0L4 4L0 8Z" fill="#444"/></svg>

<!-- palette strip -->
<div class="a" style="left:205px;top:588px;width:658px;height:19px;background:#fff;border-top:1px solid #e8e8e8"></div>
<svg style="left:210px;top:592px" width="13" height="12" viewBox="0 0 13 12"><path d="M4 0.8 L9.5 6.3 L5.8 9.8 L0.8 6.3 Z" fill="none" stroke="#111" stroke-width="1.5" stroke-linejoin="round"/><path d="M1.3 6.3 L9 6.3 L5.8 9.5Z" fill="#111"/><circle cx="11" cy="9.5" r="1.6" fill="#111"/></svg>
<div class="dd" style="left:229px;top:597px"></div>
<div class="sw" style="left:237.50px;width:4.88px;background:#7a0a0a"></div>
<div class="sw" style="left:243.18px;width:4.88px;background:#9a0c0c"></div>
<div class="sw" style="left:248.86px;width:4.88px;background:#b41818"></div>
<div class="sw" style="left:254.55px;width:4.88px;background:#b82832"></div>
<div class="sw" style="left:260.23px;width:4.88px;background:#c43c48"></div>
<div class="sw" style="left:265.91px;width:4.88px;background:#c85a64"></div>
<div class="sw" style="left:271.59px;width:4.88px;background:#d47480"></div>
<div class="sw" style="left:277.27px;width:4.88px;background:#dc9098"></div>
<div class="sw" style="left:282.95px;width:4.88px;background:#e6aab2"></div>
<div class="sw" style="left:288.64px;width:4.88px;background:#eecaca"></div>
<div class="sw" style="left:294.32px;width:4.88px;background:#6a0810"></div>
<div class="sw" style="left:300.00px;width:4.88px;background:#a00a12"></div>
<div class="sw" style="left:305.68px;width:4.88px;background:#d00808"></div>
<div class="sw" style="left:311.36px;width:4.88px;background:#f00a0a"></div>
<div class="sw" style="left:317.05px;width:4.88px;background:#f02424"></div>
<div class="sw" style="left:322.73px;width:4.88px;background:#f04444"></div>
<div class="sw" style="left:328.41px;width:4.88px;background:#f06262"></div>
<div class="sw" style="left:334.09px;width:4.88px;background:#f08080"></div>
<div class="sw" style="left:339.77px;width:4.88px;background:#f8a0a4"></div>
<div class="sw" style="left:345.45px;width:4.88px;background:#f8c0c4"></div>
<div class="sw" style="left:351.14px;width:4.88px;background:#4e3c00"></div>
<div class="sw" style="left:356.82px;width:4.88px;background:#6c5200"></div>
<div class="sw" style="left:362.50px;width:4.88px;background:#846c00"></div>
<div class="sw" style="left:368.18px;width:4.88px;background:#9c8200"></div>
<div class="sw" style="left:373.86px;width:4.88px;background:#b49000"></div>
<div class="sw" style="left:379.55px;width:4.88px;background:#d0a800"></div>
<div class="sw" style="left:385.23px;width:4.88px;background:#e8b800"></div>
<div class="sw" style="left:390.91px;width:4.88px;background:#f0c000"></div>
<div class="sw" style="left:396.59px;width:4.88px;background:#f8c828"></div>
<div class="sw" style="left:402.27px;width:4.88px;background:#f8cc40"></div>
<div class="sw" style="left:407.95px;width:4.88px;background:#3c3c00"></div>
<div class="sw" style="left:413.64px;width:4.88px;background:#5c5c00"></div>
<div class="sw" style="left:419.32px;width:4.88px;background:#747400"></div>
<div class="sw" style="left:425.00px;width:4.88px;background:#8c8c00"></div>
<div class="sw" style="left:430.68px;width:4.88px;background:#a8a800"></div>
<div class="sw" style="left:436.36px;width:4.88px;background:#c8c800"></div>
<div class="sw" style="left:442.05px;width:4.88px;background:#d8d800"></div>
<div class="sw" style="left:447.73px;width:4.88px;background:#f0f000"></div>
<div class="sw" style="left:453.41px;width:4.88px;background:#f8f800"></div>
<div class="sw" style="left:459.09px;width:4.88px;background:#f8f820"></div>
<div class="sw" style="left:464.77px;width:4.88px;background:#283c10"></div>
<div class="sw" style="left:470.45px;width:4.88px;background:#3c5818"></div>
<div class="sw" style="left:476.14px;width:4.88px;background:#507420"></div>
<div class="sw" style="left:481.82px;width:4.88px;background:#649028"></div>
<div class="sw" style="left:487.50px;width:4.88px;background:#78a838"></div>
<div class="sw" style="left:493.18px;width:4.88px;background:#8cc048"></div>
<div class="sw" style="left:498.86px;width:4.88px;background:#9cd058"></div>
<div class="sw" style="left:504.55px;width:4.88px;background:#a8d870"></div>
<div class="sw" style="left:510.23px;width:4.88px;background:#b4e080"></div>
<div class="sw" style="left:515.91px;width:4.88px;background:#bce48c"></div>
<div class="sw" style="left:521.59px;width:4.88px;background:#004018"></div>
<div class="sw" style="left:527.27px;width:4.88px;background:#006828"></div>
<div class="sw" style="left:532.95px;width:4.88px;background:#008838"></div>
<div class="sw" style="left:538.64px;width:4.88px;background:#00a040"></div>
<div class="sw" style="left:544.32px;width:4.88px;background:#10b050"></div>
<div class="sw" style="left:550.00px;width:4.88px;background:#28b860"></div>
<div class="sw" style="left:555.68px;width:4.88px;background:#40c070"></div>
<div class="sw" style="left:561.36px;width:4.88px;background:#58c880"></div>
<div class="sw" style="left:567.05px;width:4.88px;background:#70d090"></div>
<div class="sw" style="left:572.73px;width:4.88px;background:#80d898"></div>
<div class="sw" style="left:578.41px;width:4.88px;background:#002838"></div>
<div class="sw" style="left:584.09px;width:4.88px;background:#004060"></div>
<div class="sw" style="left:589.77px;width:4.88px;background:#005880"></div>
<div class="sw" style="left:595.45px;width:4.88px;background:#0070a0"></div>
<div class="sw" style="left:601.14px;width:4.88px;background:#0088b8"></div>
<div class="sw" style="left:606.82px;width:4.88px;background:#10a0d0"></div>
<div class="sw" style="left:612.50px;width:4.88px;background:#20b0e0"></div>
<div class="sw" style="left:618.18px;width:4.88px;background:#30b8e8"></div>
<div class="sw" style="left:623.86px;width:4.88px;background:#48c0ec"></div>
<div class="sw" style="left:629.55px;width:4.88px;background:#60c8f0"></div>
<div class="sw" style="left:635.23px;width:4.88px;background:#002040"></div>
<div class="sw" style="left:640.91px;width:4.88px;background:#003868"></div>
<div class="sw" style="left:646.59px;width:4.88px;background:#005090"></div>
<div class="sw" style="left:652.27px;width:4.88px;background:#0060b0"></div>
<div class="sw" style="left:657.95px;width:4.88px;background:#1070c0"></div>
<div class="sw" style="left:663.64px;width:4.88px;background:#2080c8"></div>
<div class="sw" style="left:669.32px;width:4.88px;background:#3090d0"></div>
<div class="sw" style="left:675.00px;width:4.88px;background:#40a0d8"></div>
<div class="sw" style="left:680.68px;width:4.88px;background:#58a8dc"></div>
<div class="sw" style="left:686.36px;width:4.88px;background:#70b4e0"></div>
<div class="sw" style="left:692.05px;width:4.88px;background:#001840"></div>
<div class="sw" style="left:697.73px;width:4.88px;background:#102860"></div>
<div class="sw" style="left:703.41px;width:4.88px;background:#203878"></div>
<div class="sw" style="left:709.09px;width:4.88px;background:#304888"></div>
<div class="sw" style="left:714.77px;width:4.88px;background:#405898"></div>
<div class="sw" style="left:720.45px;width:4.88px;background:#5068a0"></div>
<div class="sw" style="left:726.14px;width:4.88px;background:#6078a8"></div>
<div class="sw" style="left:731.82px;width:4.88px;background:#7088b0"></div>
<div class="sw" style="left:737.50px;width:4.88px;background:#8098b8"></div>
<div class="sw" style="left:743.18px;width:4.88px;background:#90a8c4"></div>
<div class="sw" style="left:748.86px;width:4.88px;background:#200c40"></div>
<div class="sw" style="left:754.55px;width:4.88px;background:#381860"></div>
<div class="sw" style="left:760.23px;width:4.88px;background:#502478"></div>
<div class="sw" style="left:765.91px;width:4.88px;background:#683090"></div>
<div class="sw" style="left:771.59px;width:4.88px;background:#7840a0"></div>
<div class="sw" style="left:777.27px;width:4.88px;background:#8850b0"></div>
<div class="sw" style="left:782.95px;width:4.88px;background:#9860b8"></div>
<div class="sw" style="left:788.64px;width:4.88px;background:#a070c0"></div>
<div class="sw" style="left:794.32px;width:4.88px;background:#a880c4"></div>
<div class="sw" style="left:800.00px;width:4.88px;background:#b090cc"></div>
<div class="sw" style="left:805.68px;width:4.88px;background:#202020"></div>
<div class="sw" style="left:811.36px;width:4.88px;background:#383838"></div>
<div class="sw" style="left:817.05px;width:4.88px;background:#484848"></div>
<div class="sw" style="left:822.73px;width:4.88px;background:#5c5c5c"></div>
<div class="sw" style="left:828.41px;width:4.88px;background:#707070"></div>
<div class="sw" style="left:834.09px;width:4.88px;background:#848484"></div>
<div class="sw" style="left:839.77px;width:4.88px;background:#989898"></div>
<div class="sw" style="left:845.45px;width:4.88px;background:#acacac"></div>
<div class="sw" style="left:851.14px;width:4.88px;background:#bcbcbc"></div>
<div class="sw" style="left:856.82px;width:4.88px;background:#cccccc"></div>
<!-- RIGHT ICON STRIP -->
<div class="a" style="left:862px;top:128px;width:1px;height:479px;background:#f0f0f0"></div><div class="a" style="left:863px;top:128px;width:1px;height:479px;background:#7a7a7a"></div>
<div class="a" style="left:864px;top:128px;width:34px;height:479px;background:#fff"></div>
<svg style="left:872px;top:134px" width="17" height="13" viewBox="0 0 17 13"><path d="M1.5 1L7 6.5L1.5 12M8.5 1L14 6.5L8.5 12" stroke="#111" stroke-width="2.4" fill="none"/></svg>
<div class="a" style="left:864px;top:151px;width:34px;height:31px;background:#0a78d6"></div>
<svg style="left:871px;top:158px" width="17" height="16" viewBox="0 0 17 16"><path d="M5.5 1.2 L12 7.8 L7.5 12.3 L1.2 7.8 Z" fill="none" stroke="#111" stroke-width="2" stroke-linejoin="round"/><path d="M1.6 7.8 L11.3 7.8 L7.5 11.8Z" fill="#111"/><circle cx="14.5" cy="13" r="2" fill="#111"/></svg>
<svg style="left:871px;top:198px" width="17" height="16" viewBox="0 0 17 16"><rect x="1" y="1" width="5.5" height="5.5" fill="none" stroke="#111" stroke-width="2"/><rect x="10.5" y="1" width="5.5" height="5.5" fill="none" stroke="#111" stroke-width="2"/><rect x="1" y="9.5" width="5.5" height="5.5" fill="none" stroke="#111" stroke-width="2"/><rect x="10.5" y="9.5" width="5.5" height="5.5" fill="none" stroke="#111" stroke-width="2"/></svg>
<svg style="left:871px;top:237px" width="17" height="17" viewBox="0 0 17 17"><rect x="0" y="0" width="17" height="17" rx="2" fill="#111"/><path d="M2.5 13.5 L6.5 8.5 L9 11 L11 9 L14.5 13.5 Z" fill="#fff"/></svg>
<svg style="left:871px;top:283px" width="17" height="4" viewBox="0 0 17 4"><rect x="0" y="0" width="3.5" height="3.5" fill="#111"/><rect x="6.7" y="0" width="3.5" height="3.5" fill="#111"/><rect x="13.4" y="0" width="3.5" height="3.5" fill="#111"/></svg>

<!-- RIGHT PANEL -->
<div class="a" style="left:898px;top:128px;width:2px;height:479px;background:#4a86c6"></div>
<div class="a" style="left:1078px;top:128px;width:2px;height:479px;background:#4a86c6"></div>
<div class="a" style="left:900px;top:128px;width:178px;height:1px;background:#d0d0d0"></div>
<div class="a" style="left:959px;top:129px;width:119px;height:22px;background:#dedede"></div>
<div class="t" style="left:919px;top:136px">填充</div>
<div class="t" style="left:978px;top:136px">线条</div>
<div class="t" style="left:1038px;top:136px">阴影</div>
<div class="a" style="left:905px;top:158px;width:11px;height:11px;border-radius:50%;border:1px solid #9a9a9a;background:#fff"></div>
<div class="t" style="left:921px;top:157px">无填充</div>
<div class="a" style="left:905px;top:179px;width:11px;height:11px;border-radius:50%;border:1px solid #555;background:#fff"></div>
<div class="a" style="left:908px;top:182px;width:5px;height:5px;border-radius:50%;background:#111"></div>
<div class="t" style="left:921px;top:179px">单色填充</div>
<div class="a" style="left:905px;top:201px;width:11px;height:11px;border-radius:50%;border:1px solid #9a9a9a;background:#fff"></div>
<div class="t" style="left:921px;top:200px">线性渐变填充</div>
<div class="a" style="left:905px;top:223px;width:11px;height:11px;border-radius:50%;border:1px solid #9a9a9a;background:#fff"></div>
<div class="t" style="left:921px;top:222px">径向渐变填充</div>
<div class="a" style="left:905px;top:245px;width:11px;height:11px;border-radius:50%;border:1px solid #9a9a9a;background:#fff"></div>
<div class="t" style="left:921px;top:244px">图案填充</div>
<div class="a" style="left:905px;top:266px;width:11px;height:11px;border-radius:50%;border:1px solid #9a9a9a;background:#fff"></div>
<div class="t" style="left:921px;top:266px">图片或纹理填充</div>
<div class="t" style="left:905px;top:292px">颜色</div>
<div class="a" style="left:1021px;top:289px;width:52px;height:19px;background:#ffa500;border:1px solid #6a8a7a"></div>
<div class="t" style="left:905px;top:320px">亮度</div>
<div class="a" style="left:905px;top:348px;width:105px;height:2px;background:#0a78d6"></div>
<div class="a" style="left:952px;top:344px;width:11px;height:11px;border-radius:50%;background:#0a78d6"></div>
<div class="a" style="left:1020px;top:341px;width:54px;height:20px;border:1px solid #cfcfcf;background:#fff"></div>
<div class="t" style="left:1024px;top:345px">0 %</div>
<svg style="left:1063px;top:345px" width="6" height="12" viewBox="0 0 6 12"><path d="M0 4L3 1L6 4Z M0 8L3 11L6 8Z" fill="#222"/></svg>
<div class="t" style="left:905px;top:371px">透明度</div>
<div class="a" style="left:905px;top:399px;width:100px;height:2px;background:#0a78d6"></div>
<div class="a" style="left:1000px;top:395px;width:11px;height:11px;border-radius:50%;background:#0a78d6"></div>
<div class="a" style="left:1020px;top:392px;width:54px;height:20px;border:1px solid #cfcfcf;background:#fff"></div>
<div class="t" style="left:1024px;top:396px">100 %</div>
<svg style="left:1063px;top:396px" width="6" height="12" viewBox="0 0 6 12"><path d="M0 4L3 1L6 4Z M0 8L3 11L6 8Z" fill="#222"/></svg>
<!-- STATUS BAR -->
<div class="a" style="left:0;top:607px;width:1080px;height:22px;background:#0a78d6"></div>
<div class="a" style="left:2px;top:610px;width:31px;height:17px;background:#3a8de0;border:1px solid #a8d4fa"></div>
<div class="t" style="left:7px;top:613px;color:#0c2650">页-1</div>
<svg style="left:37px;top:612px" width="15" height="14" viewBox="0 0 15 14"><path d="M7.5 0V14M0 7H15" stroke="#0c1c40" stroke-width="2.2"/></svg>
<div class="t" style="left:169px;top:613px;color:#e8f2ff">形状ID：</div>
<div class="t" style="left:215px;top:613px;color:#e8f2ff;font-size:12px;transform:scaleX(0.958);transform-origin:0 0">00000000-0000-0000-0000-000000000000</div>
<div class="t" style="left:439px;top:613px;color:#e8f2ff;font-size:12px;transform:scaleX(0.948);transform-origin:0 0">- 39153ee5-35b6-44ca-980c-ce87da972839</div>
<div class="t" style="left:667px;top:613px;color:#e8f2ff">鼠标位置(mm)：</div>
<div class="t" style="left:752px;top:613px;color:#e8f2ff;font-size:12px;transform:scaleX(0.89);transform-origin:0 0">161.4 , 16</div>
<div class="a" style="left:806px;top:613px;width:10px;height:10px;background:#fff"></div>
<div class="t" style="left:822px;top:613px;color:#e8f2ff;font-size:12px;transform:scaleX(0.78);transform-origin:0 0">#FFFFFFFF</div>
<svg style="left:894px;top:612px" width="15" height="14" viewBox="0 0 15 14"><rect x="0.8" y="0.8" width="13.4" height="9.4" fill="#0c3a70" stroke="#081830" stroke-width="1.5"/><path d="M3.5 7.5 L6 5 M8 7 L11 4" stroke="#5aa8f0" fill="none" stroke-width="1.2"/><path d="M7.5 10.5V12.5M4.5 13.3H10.5" stroke="#081830" stroke-width="1.5"/></svg>
<div class="t" style="left:913px;top:613px;color:#e8f2ff;font-size:12px;transform:scaleX(0.93);transform-origin:0 0">100.00%</div>
<div class="a" style="left:973px;top:618px;width:91px;height:1px;background:#d8ecff"></div>
<div class="a" style="left:978px;top:613px;width:3px;height:11px;background:#e8f4ff"></div>
<div class="a" style="left:1018px;top:615px;width:1px;height:7px;background:#d8ecff"></div>
</body></html>
